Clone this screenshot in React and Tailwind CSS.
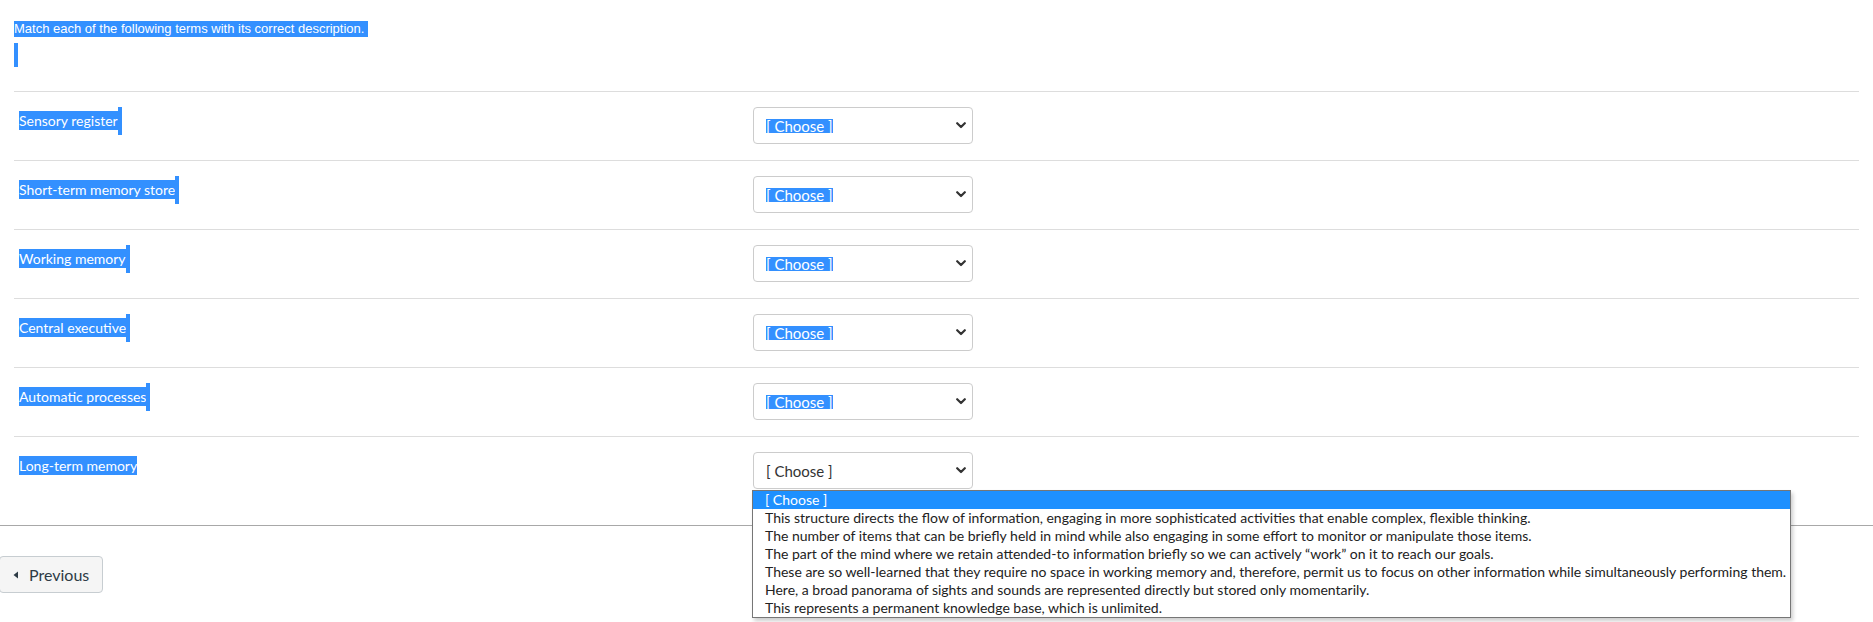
import React from "react";

const terms = [
  "Sensory register",
  "Short-term memory store",
  "Working memory",
  "Central executive",
  "Automatic processes",
  "Long-term memory",
];

const options = [
  "This structure directs the flow of information, engaging in more sophisticated activities that enable complex, flexible thinking.",
  "The number of items that can be briefly held in mind while also engaging in some effort to monitor or manipulate those items.",
  "The part of the mind where we retain attended-to information briefly so we can actively \u201cwork\u201d on it to reach our goals.",
  "These are so well-learned that they require no space in working memory and, therefore, permit us to focus on other information while simultaneously performing them.",
  "Here, a broad panorama of sights and sounds are represented directly but stored only momentarily.",
  "This represents a permanent knowledge base, which is unlimited.",
];

function Chevron() {
  return (
    <svg width="10" height="7" viewBox="0 0 10 7" className="shrink-0">
      <path d="M1.2 1.2 L5 5 L8.8 1.2" fill="none" stroke="#333" strokeWidth="2.2" strokeLinecap="round" strokeLinejoin="round" />
    </svg>
  );
}

function Select({ highlighted, open }) {
  return (
    <div className="relative w-[220px]">
      <div className="flex h-[37px] w-[220px] items-center justify-between rounded-[4px] border border-[#cccccc] bg-white pl-[12px] pr-[6px] font-['Lato',sans-serif] text-[15px]">
        {highlighted ? (
          <span className="bg-[#3390ff] leading-[14px] text-white">[ Choose ]</span>
        ) : (
          <span className="leading-[14px] text-[#333333]">[ Choose ]</span>
        )}
        <Chevron />
      </div>
      {open && (
        <div className="absolute left-[-1px] top-[38px] z-10 w-max border border-[#767676] bg-white font-['Lato',sans-serif] text-[14px] text-[#222222] shadow-[2px_3px_4px_rgba(0,0,0,0.2)]">
          <div className="h-[18px] whitespace-nowrap bg-[#1e90ff] pl-[12px] pr-[4px] leading-[18px] text-white">[ Choose ]</div>
          {options.map((o) => (
            <div key={o} className="h-[18px] whitespace-nowrap pl-[12px] pr-[4px] leading-[18px]">
              {o}
            </div>
          ))}
        </div>
      )}
    </div>
  );
}

export default function App() {
  return (
    <div className="min-h-[622px] w-full bg-white font-['Lato',sans-serif]">
      <div className="px-[14px]">
        <div className="mt-[21px] h-[16px] font-['Liberation_Sans',Arial,sans-serif] text-[13px] leading-[16px]">
          <span className="inline-block h-[16px] bg-[#3390ff] pr-[4px] leading-[16px] text-white">
            Match each of the following terms with its correct description.
          </span>
        </div>
        <div className="mt-[6px] h-[24px] w-[4px] bg-[#3390ff]" />
        <div className="mt-[24px]">
          {terms.map((t, i) => {
            const last = i === terms.length - 1;
            return (
              <div key={t} className="grid grid-cols-[40%_60%] border-t border-[#dddddd] pt-[15px] pb-[16px]">
                <div className="flex items-start pl-[5px] text-[14px]">
                  <span className="mt-[4px] h-[19px] bg-[#3390ff] leading-[19px] text-white">{t}</span>
                  {!last && <span className="h-[28px] w-[4px] bg-[#3390ff]" />}
                </div>
                <div className="pl-[1px]">
                  <Select highlighted={!last} open={last} />
                </div>
              </div>
            );
          })}
        </div>
      </div>
      <div className="mt-[20px] border-t border-[#a8a8a8]" />
      <div className="pt-[30px]">
        <button className="ml-[-1px] flex h-[37px] w-[104px] items-center rounded-[4px] border border-[#c7cdd1] bg-[#f5f5f5] font-['Lato',sans-serif] text-[16px] text-[#2d3b45]">
          <svg width="6" height="8" viewBox="0 0 6 8" className="ml-[13px] mr-[10px]">
            <path d="M5 0.5 L0.5 4 L5 7.5 Z" fill="#2d3b45" />
          </svg>
          Previous
        </button>
      </div>
    </div>
  );
}
